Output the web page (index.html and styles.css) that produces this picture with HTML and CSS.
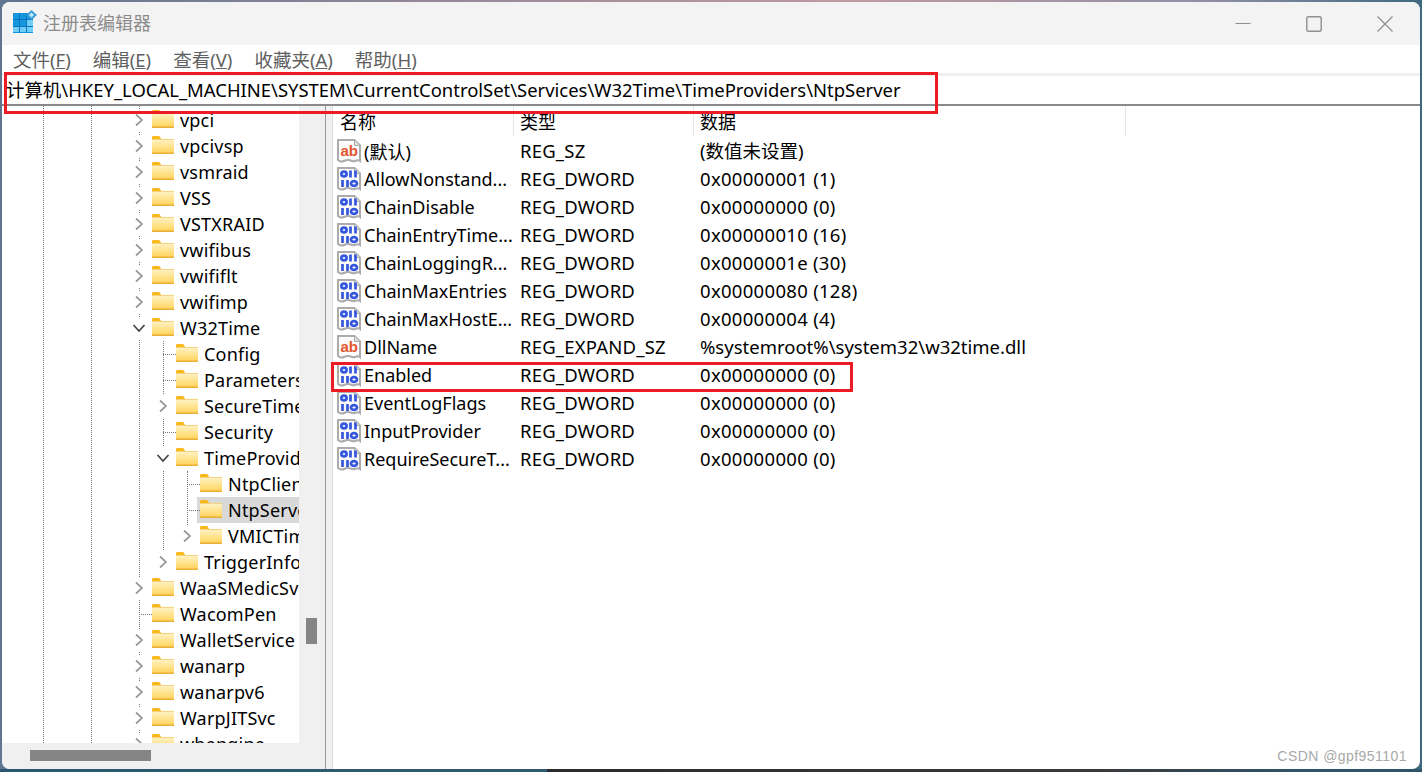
FILE: index.html
```html
<!DOCTYPE html>
<html lang="zh-CN">
<head>
  <meta charset="UTF-8" />
  <title>注册表编辑器</title>
  <link rel="stylesheet" href="styles.css">
</head>
<body>
  <svg class="defs" width="0" height="0">
    <defs>
      <linearGradient id="folderFill" x1="0" y1="0" x2="0" y2="1">
        <stop offset="0" stop-color="#fff3c4"/>
        <stop offset="1" stop-color="#ffd560"/>
      </linearGradient>
      <symbol id="folder" viewBox="0 0 22 18">
        <path d="M0 1.5C0 .7.5 0 1.200 0H7l2 2.500V4H0z" fill="#f9b81c"/>
        <rect x="0" y="3" width="22" height="15" fill="#e9ae35"/>
        <rect x="0" y="3.500" width="22" height="13" fill="url(#folderFill)"/>
      </symbol>
      <symbol id="closed" viewBox="0 0 10 14">
        <path d="M2 1.500 8 7l-6 5.500" fill="none" stroke="#999" stroke-width="1.700"/>
      </symbol>
      <symbol id="open" viewBox="0 0 14 10">
        <path d="M1.500 2 7 8l5.500-6" fill="none" stroke="#444" stroke-width="1.700"/>
      </symbol>
      <symbol id="page" viewBox="0 0 24 24">
        <path d="M1 1H17.500L23 6.500V22C20 19.500 18 23.500 15 22S10 20.500 7 22 3 22.500 1 21z" fill="#fbfbfb" stroke="#acacac" stroke-width="2"/>
        <path d="M17.500 1V6.500H23" fill="#dcdcdc" stroke="#acacac" stroke-width="1"/>
      </symbol>
      <symbol id="bin" viewBox="0 0 24 24">
        <use href="#page"/>
        <g fill="none" stroke="#3557dc" stroke-width="2.700">
          <ellipse cx="7" cy="7" rx="2.600" ry="2.400"/>
          <path d="M13.500 3.500V10.500M18.500 3.500V10.500"/>
          <path d="M5.500 13V20M10.500 13V20"/>
          <ellipse cx="17" cy="16.500" rx="3" ry="2.400"/>
        </g>
      </symbol>
    </defs>
  </svg>

  <div class="window">
    <!-- Title bar -->
    <header class="titlebar">
      <svg class="app-icon" width="24" height="24" viewBox="0 0 24 24">
        <rect x="0" y="3" width="20" height="20" fill="#1597de"/>
        <g fill="#0b74bd">
          <rect x="0" y="9" width="20" height="1"/>
          <rect x="0" y="16" width="20" height="1"/>
          <rect x="6" y="3" width="1" height="20"/>
          <rect x="13" y="3" width="1" height="20"/>
        </g>
        <g fill="#6fcdf6">
          <rect x="14" y="17" width="6" height="5"/>
          <rect x="7" y="17" width="6" height="5"/>
          <rect x="14" y="10" width="6" height="6"/>
          <rect x="0" y="17" width="6" height="5"/>
        </g>
        <path d="M18.500 0 24 5l-5.500 5L13 5z" fill="#3a9fd8"/>
        <path d="M18.500 2.500 21 5l-2.500 2.500L16 5z" fill="#bfe8fa"/>
      </svg>
      <span class="title-text">注册表编辑器</span>
      <div class="controls">
        <svg class="ctl" width="16" height="16" viewBox="0 0 16 16"><path d="M.5 7.500h15" stroke="#8f8f8f" fill="none"/></svg>
        <svg class="ctl" width="16" height="16" viewBox="0 0 16 16"><rect x=".8" y=".8" width="14.400" height="14.400" rx="1.500" stroke="#8f8f8f" stroke-width="1.400" fill="none"/></svg>
        <svg class="ctl" width="16" height="16" viewBox="0 0 16 16"><path d="M.5.5l15 15M15.500.5l-15 15" stroke="#8f8f8f" stroke-width="1.200" fill="none"/></svg>
      </div>
    </header>

    <!-- Menu -->
    <nav class="menubar">
      <span class="menu-item">文件(<u>F</u>)</span>
      <span class="menu-item">编辑(<u>E</u>)</span>
      <span class="menu-item">查看(<u>V</u>)</span>
      <span class="menu-item">收藏夹(<u>A</u>)</span>
      <span class="menu-item">帮助(<u>H</u>)</span>
    </nav>

    <!-- Address -->
    <div class="address">计算机\HKEY_LOCAL_MACHINE\SYSTEM\CurrentControlSet\Services\W32Time\TimeProviders\NtpServer</div>

    <div class="panes">
      <!-- Key tree -->
      <aside class="tree-pane">
        <div class="tree-body">
          <div class="tree">
            <i class="guide g-a"></i>
            <i class="guide g-b"></i>
            <i class="guide g-c"></i>
            <i class="guide g-d"></i>
            <i class="guide g-e"></i>
            <div class="node"><span class="chev"><svg width="10" height="14"><use href="#closed"/></svg></span><svg class="folder" width="22" height="18"><use href="#folder"/></svg><span class="label">vpci</span></div>
            <div class="node"><span class="chev"><svg width="10" height="14"><use href="#closed"/></svg></span><svg class="folder" width="22" height="18"><use href="#folder"/></svg><span class="label">vpcivsp</span></div>
            <div class="node"><span class="chev"><svg width="10" height="14"><use href="#closed"/></svg></span><svg class="folder" width="22" height="18"><use href="#folder"/></svg><span class="label">vsmraid</span></div>
            <div class="node"><span class="chev"><svg width="10" height="14"><use href="#closed"/></svg></span><svg class="folder" width="22" height="18"><use href="#folder"/></svg><span class="label">VSS</span></div>
            <div class="node"><span class="chev"><svg width="10" height="14"><use href="#closed"/></svg></span><svg class="folder" width="22" height="18"><use href="#folder"/></svg><span class="label">VSTXRAID</span></div>
            <div class="node"><span class="chev"><svg width="10" height="14"><use href="#closed"/></svg></span><svg class="folder" width="22" height="18"><use href="#folder"/></svg><span class="label">vwifibus</span></div>
            <div class="node"><span class="chev"><svg width="10" height="14"><use href="#closed"/></svg></span><svg class="folder" width="22" height="18"><use href="#folder"/></svg><span class="label">vwififlt</span></div>
            <div class="node"><span class="chev"><svg width="10" height="14"><use href="#closed"/></svg></span><svg class="folder" width="22" height="18"><use href="#folder"/></svg><span class="label">vwifimp</span></div>
            <div class="node"><span class="chev"><svg width="14" height="10"><use href="#open"/></svg></span><svg class="folder" width="22" height="18"><use href="#folder"/></svg><span class="label">W32Time</span></div>
            <div class="node lvl2"><span class="stem"></span><svg class="folder" width="22" height="18"><use href="#folder"/></svg><span class="label">Config</span></div>
            <div class="node lvl2"><span class="stem"></span><svg class="folder" width="22" height="18"><use href="#folder"/></svg><span class="label">Parameters</span></div>
            <div class="node lvl2"><span class="chev"><svg width="10" height="14"><use href="#closed"/></svg></span><svg class="folder" width="22" height="18"><use href="#folder"/></svg><span class="label">SecureTimeLimits</span></div>
            <div class="node lvl2"><span class="stem"></span><svg class="folder" width="22" height="18"><use href="#folder"/></svg><span class="label">Security</span></div>
            <div class="node lvl2"><span class="chev"><svg width="14" height="10"><use href="#open"/></svg></span><svg class="folder" width="22" height="18"><use href="#folder"/></svg><span class="label">TimeProviders</span></div>
            <div class="node lvl3"><span class="stem"></span><svg class="folder" width="22" height="18"><use href="#folder"/></svg><span class="label">NtpClient</span></div>
            <div class="node lvl3 selected"><span class="stem"></span><svg class="folder" width="22" height="18"><use href="#folder"/></svg><span class="label">NtpServer</span></div>
            <div class="node lvl3"><span class="chev"><svg width="10" height="14"><use href="#closed"/></svg></span><svg class="folder" width="22" height="18"><use href="#folder"/></svg><span class="label">VMICTimeProvider</span></div>
            <div class="node lvl2"><span class="chev"><svg width="10" height="14"><use href="#closed"/></svg></span><svg class="folder" width="22" height="18"><use href="#folder"/></svg><span class="label">TriggerInfo</span></div>
            <div class="node"><span class="chev"><svg width="10" height="14"><use href="#closed"/></svg></span><svg class="folder" width="22" height="18"><use href="#folder"/></svg><span class="label">WaaSMedicSvc</span></div>
            <div class="node"><span class="stem"></span><svg class="folder" width="22" height="18"><use href="#folder"/></svg><span class="label">WacomPen</span></div>
            <div class="node"><span class="chev"><svg width="10" height="14"><use href="#closed"/></svg></span><svg class="folder" width="22" height="18"><use href="#folder"/></svg><span class="label">WalletService</span></div>
            <div class="node"><span class="chev"><svg width="10" height="14"><use href="#closed"/></svg></span><svg class="folder" width="22" height="18"><use href="#folder"/></svg><span class="label">wanarp</span></div>
            <div class="node"><span class="chev"><svg width="10" height="14"><use href="#closed"/></svg></span><svg class="folder" width="22" height="18"><use href="#folder"/></svg><span class="label">wanarpv6</span></div>
            <div class="node"><span class="chev"><svg width="10" height="14"><use href="#closed"/></svg></span><svg class="folder" width="22" height="18"><use href="#folder"/></svg><span class="label">WarpJITSvc</span></div>
            <div class="node"><span class="chev"><svg width="10" height="14"><use href="#closed"/></svg></span><svg class="folder" width="22" height="18"><use href="#folder"/></svg><span class="label">wbengine</span></div>
          </div>
          <div class="vscroll"><div class="vthumb"></div></div>
        </div>
        <div class="hscroll"><div class="hthumb"></div></div>
      </aside>

      <div class="splitter"></div>

      <!-- Values -->
      <main class="values">
        <div class="val-head">
          <span class="col-name">名称</span>
          <span class="col-type">类型</span>
          <span class="col-data">数据</span>
        </div>
        <div class="val-row"><span class="col-name"><svg width="24" height="24"><use href="#page"/><text class="ab" x="3.500" y="17">ab</text></svg><span class="val-text">(默认)</span></span><span class="col-type">REG_SZ</span><span class="col-data">(数值未设置)</span></div>
        <div class="val-row"><span class="col-name"><svg width="24" height="24"><use href="#bin"/></svg><span class="val-text">AllowNonstand...</span></span><span class="col-type">REG_DWORD</span><span class="col-data hex">0x00000001 (1)</span></div>
        <div class="val-row"><span class="col-name"><svg width="24" height="24"><use href="#bin"/></svg><span class="val-text">ChainDisable</span></span><span class="col-type">REG_DWORD</span><span class="col-data hex">0x00000000 (0)</span></div>
        <div class="val-row"><span class="col-name"><svg width="24" height="24"><use href="#bin"/></svg><span class="val-text">ChainEntryTime...</span></span><span class="col-type">REG_DWORD</span><span class="col-data hex">0x00000010 (16)</span></div>
        <div class="val-row"><span class="col-name"><svg width="24" height="24"><use href="#bin"/></svg><span class="val-text">ChainLoggingR...</span></span><span class="col-type">REG_DWORD</span><span class="col-data hex">0x0000001e (30)</span></div>
        <div class="val-row"><span class="col-name"><svg width="24" height="24"><use href="#bin"/></svg><span class="val-text">ChainMaxEntries</span></span><span class="col-type">REG_DWORD</span><span class="col-data hex">0x00000080 (128)</span></div>
        <div class="val-row"><span class="col-name"><svg width="24" height="24"><use href="#bin"/></svg><span class="val-text">ChainMaxHostE...</span></span><span class="col-type">REG_DWORD</span><span class="col-data hex">0x00000004 (4)</span></div>
        <div class="val-row"><span class="col-name"><svg width="24" height="24"><use href="#page"/><text class="ab" x="3.500" y="17">ab</text></svg><span class="val-text">DllName</span></span><span class="col-type">REG_EXPAND_SZ</span><span class="col-data">%systemroot%\system32\w32time.dll</span></div>
        <div class="val-row"><span class="col-name"><svg width="24" height="24"><use href="#bin"/></svg><span class="val-text">Enabled</span></span><span class="col-type">REG_DWORD</span><span class="col-data hex">0x00000000 (0)</span></div>
        <div class="val-row"><span class="col-name"><svg width="24" height="24"><use href="#bin"/></svg><span class="val-text">EventLogFlags</span></span><span class="col-type">REG_DWORD</span><span class="col-data hex">0x00000000 (0)</span></div>
        <div class="val-row"><span class="col-name"><svg width="24" height="24"><use href="#bin"/></svg><span class="val-text">InputProvider</span></span><span class="col-type">REG_DWORD</span><span class="col-data hex">0x00000000 (0)</span></div>
        <div class="val-row"><span class="col-name"><svg width="24" height="24"><use href="#bin"/></svg><span class="val-text">RequireSecureT...</span></span><span class="col-type">REG_DWORD</span><span class="col-data hex">0x00000000 (0)</span></div>
      </main>
    </div>
  </div>

  <!-- Annotations on top of the screenshot -->
  <div class="mark mark-address"></div>
  <div class="mark mark-enabled"></div>
  <div class="watermark">CSDN @gpf951101</div>
</body>
</html>
```

FILE: styles.css
```css
* {
  box-sizing: border-box;
}
html, body {
  height: 100%;
}
body {
  margin: 0;
  padding: 2px 2px 3px;
  position: relative;
  overflow: hidden;
  font-family: "Noto Sans", "Noto Sans CJK SC", sans-serif;
  font-size: 18px;
  color: #000;
  background:
    linear-gradient(90deg, #2b5870 0, #2f5a72 547px, #2c2a2c 547px, #3a3a3c 1100px, #2f5468 1300px) bottom / 100% 3px no-repeat,
    linear-gradient(90deg, #5f7590 0, #9c8a9a 35%, #c09aa0 60%, #8f8ea6 85%, #3f6a80 100%);
}
.defs {
  position: absolute;
}
.window {
  height: 100%;
  display: flex;
  flex-direction: column;
  background: #fff;
  border-radius: 8px;
  overflow: hidden;
}

/* title bar */
.titlebar {
  height: 43px;
  flex: none;
  display: flex;
  align-items: center;
  padding: 0 0 4px 11px;
  background: #f3f3f3;
}
.app-icon {
  margin-right: 6px;
}
.title-text {
  color: #8c8c8c;
}
.controls {
  margin-left: auto;
  display: flex;
  gap: 55px;
  padding: 4px 27px 0 0;
}
.ctl {
  display: block;
}

/* menu */
.menubar {
  height: 28px;
  flex: none;
  display: flex;
  align-items: center;
  padding-left: 11px;
  font-size: 18.500px;
  background: #fff;
  color: #606060;
}
.menu-item {
  margin-right: 22px;
  white-space: nowrap;
}

/* address */
.address {
  height: 33px;
  flex: none;
  padding: 0 0 0 4px;
  line-height: 27px;
  font-size: 18.450px;
  white-space: nowrap;
  border-top: 3px solid #f0f0f0;
  border-bottom: 2px solid #8a8a8a;
}

/* panes */
.panes {
  flex: 1;
  min-height: 0;
  display: flex;
}
.tree-pane {
  width: 323px;
  flex: none;
  display: flex;
  flex-direction: column;
}
.tree-body {
  flex: 1;
  min-height: 0;
  display: flex;
}
.tree {
  position: relative;
  width: 297px;
  flex: none;
  overflow: hidden;
  padding-top: 1px;
}
.guide {
  position: absolute;
  width: 0;
  border-left: 1px dotted #777;
}
.g-a { left: 41px; top: 0; bottom: 0; }
.g-b { left: 89px; top: 0; bottom: 0; }
.g-c { left: 137px; top: 0; bottom: 0; }
.g-d { left: 161px; top: 235px; height: 221px; }
.g-e { left: 185px; top: 365px; height: 54px; }

.node {
  position: relative;
  height: 26px;
  display: flex;
  align-items: center;
  padding-left: 125px;
  white-space: nowrap;
}
.lvl2 {
  padding-left: 149px;
}
.lvl3 {
  padding-left: 173px;
}
.chev {
  width: 25px;
  height: 23px;
  flex: none;
  display: flex;
  align-items: center;
  justify-content: center;
  padding-right: 1px;
  background: #fff;
  position: relative;
}
.stem {
  width: 13px;
  height: 1px;
  flex: none;
  position: relative;
  border-bottom: 1px dotted #777;
  margin-left: 12px;
}
.folder {
  flex: none;
  position: relative;
  margin-top: -3px;
}
.label {
  margin-left: 6px;
  position: relative;
  letter-spacing: .2px;
}
.selected::after {
  content: "";
  position: absolute;
  left: 195px;
  right: 0;
  top: 0;
  bottom: 0;
  background: #d9d9d9;
}
.selected .folder, .selected .label, .selected .stem {
  z-index: 1;
}

/* scrollbars */
.vscroll {
  flex: 1;
  background: #f0f0f0;
  padding: 512px 8px 0 7px;
}
.vthumb {
  height: 26px;
  background: #858585;
}
.hscroll {
  height: 26px;
  flex: none;
  background: #f0f0f0;
  padding: 7px 0 0 28px;
}
.hthumb {
  width: 121px;
  height: 11px;
  background: #858585;
}
.splitter {
  width: 8px;
  flex: none;
  background: #f0f0f0;
  border-left: 1px solid #9a9a9a;
  border-right: 1px solid #dcdcdc;
}

/* values */
.values {
  flex: 1;
  min-width: 0;
}
.val-head {
  height: 31px;
  display: flex;
  align-items: flex-start;
}
.val-head span {
  height: 30px;
  line-height: 33px;
  padding-left: 6px;
  border-right: 1px solid #e5e5e5;
}
.val-head .col-name {
  padding-left: 7px;
}
.val-head .col-data {
  width: 432px;
  flex: none;
}
.col-name {
  width: 181px;
  flex: none;
  overflow: hidden;
}
.col-type {
  width: 180px;
  flex: none;
}
.val-row {
  height: 28px;
  display: flex;
  align-items: center;
  white-space: nowrap;
}
.val-row .col-name {
  display: flex;
  align-items: center;
  padding-left: 4px;
}
.val-row .col-type, .val-row .col-data {
  padding: 0 0 2px 6px;
  font-size: 18.500px;
}
.val-row .col-type {
  letter-spacing: .2px;
}
.val-row .hex {
  letter-spacing: .3px;
}
.val-text {
  margin-left: 3px;
}
.ab {
  font-family: "Liberation Sans", sans-serif;
  font-size: 15px;
  font-weight: bold;
  fill: #e2552e;
}

/* annotations */
.mark {
  position: absolute;
  border: 3px solid #ed1c24;
}
.mark-address {
  left: 4px;
  top: 72px;
  width: 934px;
  height: 42px;
}
.mark-enabled {
  left: 331px;
  top: 362px;
  width: 522px;
  height: 30px;
}
.watermark {
  position: absolute;
  right: 15px;
  bottom: 8px;
  font-family: "Liberation Sans", sans-serif;
  font-size: 14px;
  letter-spacing: .45px;
  color: #a8a8a8;
}
```
